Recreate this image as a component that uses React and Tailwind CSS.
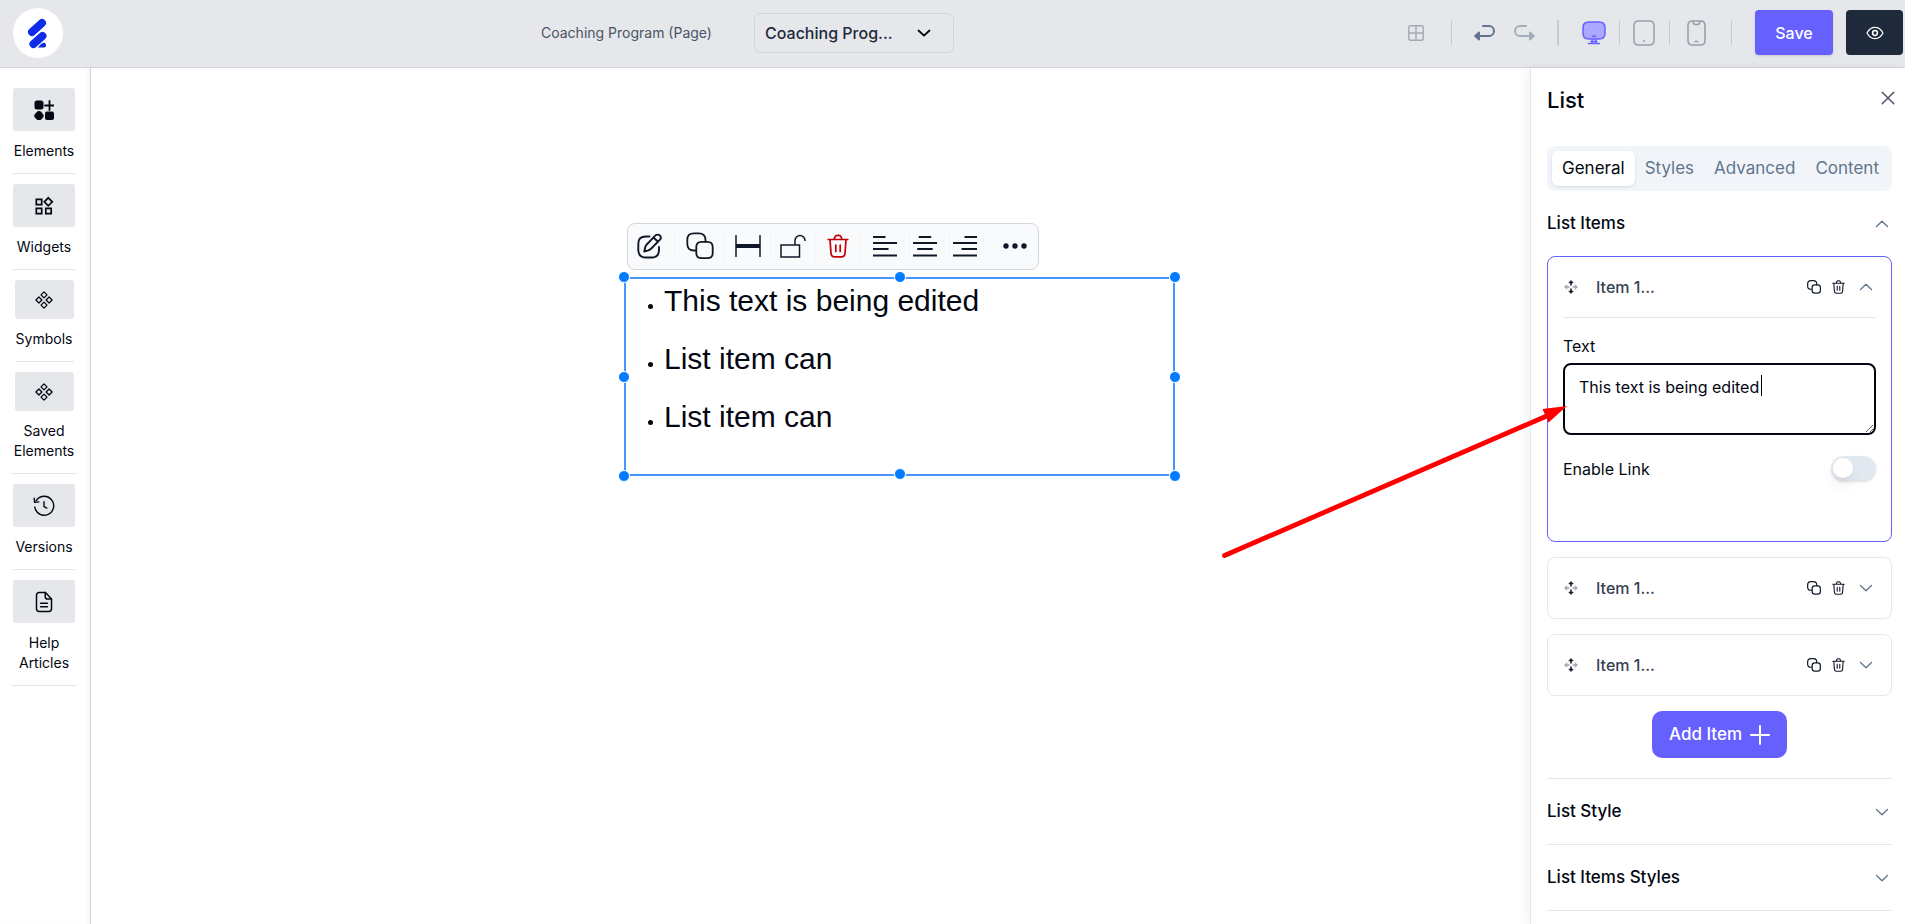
import { useState } from "react";

const stroke = {
  fill: "none",
  stroke: "currentColor",
  strokeLinecap: "round",
  strokeLinejoin: "round",
};

function Logo() {
  return (
    <svg viewBox="0 0 50 50" className="size-[50px]" aria-hidden="true">
      <circle cx="25" cy="25" r="25" fill="#fff" />
      <g stroke="#0f2de8" strokeWidth="8" strokeLinecap="round">
        <path d="M19 24 29 15" />
        <path d="M20.5 36 29.5 28" />
      </g>
      <path d="M24.5 39.5c2-1 3.600-4.800 6.500-4.800 2.600 0 3 4.800 0 4.800z" fill="#0f2de8" />
    </svg>
  );
}

function ElementsIcon() {
  return (
    <svg viewBox="0 0 20 20" className="size-5" fill="currentColor" aria-hidden="true">
      <rect x="0.500" y="0.500" width="9" height="9" rx="2.500" />
      <rect x="11" y="11.500" width="9" height="8.500" rx="2" />
      <path d="M2.500 12.200c1.300-1.500 3.700-1.500 5 0l1.600 2c.8 1 .8 2.200 0 3.200l-1.600 1.800c-1.300 1.400-3.700 1.400-5 0L.8 17.400c-.8-1-.8-2.200 0-3.200z" />
      <path d="M15.500 1v9M11 5.500h9" stroke="currentColor" strokeWidth="1.800" strokeLinecap="round" />
    </svg>
  );
}

function WidgetsIcon() {
  return (
    <svg viewBox="0 0 20 20" className="size-5" fill="none" stroke="currentColor" strokeWidth="1.700" aria-hidden="true">
      <path d="M2.300 3.300h5.400V8.600H2.300zM2.300 12.300h5.400v5.400H2.300zM11.800 12.300h5.400v5.400h-5.400zM14.300 1.800l4 4-4 4-4-4z" />
    </svg>
  );
}

function SymbolsIcon() {
  return (
    <svg viewBox="0 0 18 18" className="size-[18px]" {...stroke} strokeWidth="1.300" aria-hidden="true">
      <path d="M9 .9l3 3-3 3-3-3zM9 11.100l3 3-3 3-3-3zM3.900 6l3 3-3 3-3-3zM14.100 6l3 3-3 3-3-3z" />
    </svg>
  );
}

function VersionsIcon() {
  return (
    <svg viewBox="0 0 22 22" className="size-[22px]" {...stroke} strokeWidth="1.400" aria-hidden="true">
      <path d="M1.800 12a9.500 9.500 0 1 0 1.300-6.200" />
      <path d="M1.200 3.200l.4 4.200 4.200-.5M11 6.800v4.800l2.800 1.500" />
    </svg>
  );
}

function HelpIcon() {
  return (
    <svg viewBox="0 0 18 22" className="h-[22px] w-[18px]" {...stroke} strokeWidth="1.500" aria-hidden="true">
      <path d="M10.500 1.500H4.200A2.700 2.700 0 0 0 1.500 4.200v13.600a2.700 2.700 0 0 0 2.700 2.700h9.600a2.700 2.700 0 0 0 2.700-2.700V8z" />
      <path d="M10.200 1.500v4.300a2.200 2.200 0 0 0 2.200 2.200h4M5.500 12.200h7M5.500 15.800h7" />
    </svg>
  );
}

function Chevron({ up, className = "" }) {
  return (
    <svg viewBox="0 0 14 8" className={`h-2 w-3.5 ${className}`} {...stroke} strokeWidth="1.300" aria-hidden="true">
      <path d={up ? "M1.500 6.500 7 1.200l5.500 5.300" : "M1.500 1.500 7 6.800l5.500-5.300"} />
    </svg>
  );
}

function CopyIcon({ className, width = 1.5 }) {
  return (
    <svg viewBox="0 0 28 28" className={className} {...stroke} strokeWidth={width} aria-hidden="true">
      <path d="M9.500 18.500H8c-4.500 0-6.700-2.200-6.700-6.700V8c0-4.500 2.200-6.700 6.700-6.700h4.800c4.500 0 6.700 2.200 6.700 6.700v1.500" />
      <path d="M15.500 9.800h6c3.500 0 5.200 1.700 5.200 5.200v6c0 3.500-1.700 5.200-5.200 5.200h-6c-3.500 0-5.200-1.700-5.200-5.200v-6c0-3.500 1.700-5.200 5.200-5.200z" />
    </svg>
  );
}

function TrashIcon({ className, width = 1.5 }) {
  return (
    <svg viewBox="0 0 22 24" className={className} {...stroke} strokeWidth={width} aria-hidden="true">
      <path d="M1.200 5.500h19.600M3 5.500l1 14c.2 2.200 1.300 3.300 3.500 3.300h7c2.200 0 3.300-1.100 3.500-3.300l1-14M7 5.300l.8-2c.5-1.300 1.300-1.900 2.700-1.900h1c1.400 0 2.200.6 2.700 1.900l.8 2M8.800 11v6.500M13.200 11v6.500" />
    </svg>
  );
}

function MoveIcon() {
  return (
    <svg viewBox="0 0 14 14" className="size-3.5" aria-hidden="true">
      <g fill="#111827" stroke="#111827" strokeLinejoin="round" strokeWidth="0.600">
        <path d="M7 .4 9.200 2.900H4.800zM7 13.600 4.800 11.100h4.400z" />
        <path d="M7 3v2.500M7 8.500V11" strokeWidth="1.500" />
      </g>
      <g fill="#a1a5ae" stroke="#a1a5ae" strokeLinejoin="round" strokeWidth="0.600">
        <path d="M.4 7 2.900 4.800v4.400zM13.600 7 11.100 9.200V4.800z" />
        <path d="M3 7h2.500M8.500 7H11" strokeWidth="1.500" />
      </g>
    </svg>
  );
}

const railItems = [
  { label: "Elements", Icon: ElementsIcon, box: "h-[43px] w-[62px]", line: "w-[62px]" },
  { label: "Widgets", Icon: WidgetsIcon, box: "h-[43px] w-[62px]", line: "w-[62px]" },
  { label: "Symbols", Icon: SymbolsIcon, box: "h-[39px] w-[59px]", line: "w-[59px]" },
  { label: "Saved Elements", Icon: SymbolsIcon, box: "h-[39px] w-[59px]", line: "w-[66px]" },
  { label: "Versions", Icon: VersionsIcon, box: "h-[43px] w-[62px]", line: "w-[62px]" },
  { label: "Help Articles", Icon: HelpIcon, box: "h-[43px] w-[62px]", line: "w-[66px]" },
];

function Rail() {
  return (
    <nav className="flex w-[91px] shrink-0 flex-col items-center gap-2.5 border-r border-gray-300 bg-white pt-5 pr-[2px] shadow-[inset_-4px_0_6px_-4px_rgba(0,0,0,0.08)]">
      {railItems.map(({ label, Icon, box, line }) => (
        <button key={label} type="button" className="flex flex-col items-center text-sm leading-5 text-gray-950">
          <span className={`flex items-center justify-center rounded-[3px] bg-gray-200 ${box}`}>
            <Icon />
          </span>
          <span className="w-[66px] pt-2.5 pb-3 text-center">{label}</span>
          <span className={`h-px bg-gray-200 ${line}`} />
        </button>
      ))}
    </nav>
  );
}

function Header() {
  return (
    <header className="flex h-[68px] shrink-0 items-center border-b border-gray-300 bg-gray-200 pr-0.5 pb-0.5 pl-[13px]">
      <a href="#home" aria-label="Home">
        <Logo />
      </a>
      <div className="flex flex-1 items-center justify-center gap-[42px] pl-6">
        <span className="text-sm text-gray-600">Coaching Program (Page)</span>
        <button
          type="button"
          aria-haspopup="listbox"
          className="flex h-10 w-[200px] items-center justify-between rounded-md border border-gray-300 pr-[22px] pl-2.5 text-base font-medium text-gray-800"
        >
          Coaching Prog...
          <svg viewBox="0 0 14 8" className="h-2 w-3.5 text-gray-950" {...stroke} strokeWidth="1.800" aria-hidden="true">
            <path d="M1.500 1.500 7 6.700l5.500-5.200" />
          </svg>
        </button>
      </div>
      <div className="flex items-center">
        <button type="button" aria-label="Grid" className="text-[#a3abb6]">
          <svg viewBox="0 0 16 16" className="size-4" {...stroke} strokeWidth="1.400" aria-hidden="true">
            <rect x="0.800" y="0.800" width="14.400" height="14.400" rx="1.500" />
            <path d="M8 1v14M1 8h14" />
          </svg>
        </button>
        <span className="mr-[22px] ml-[27px] h-[25px] w-px bg-[#c5c9d0]" />
        <button type="button" aria-label="Undo" className="text-slate-500">
          <svg viewBox="0 0 21 18" className="h-[18px] w-[21px]" {...stroke} strokeWidth="2" aria-hidden="true">
            <path d="M9 2h6a5 5 0 0 1 0 10H5" />
            <path d="M5 8.500v7L1.200 12z" fill="currentColor" />
          </svg>
        </button>
        <button type="button" aria-label="Redo" className="ml-[19px] text-[#a3adba]">
          <svg viewBox="0 0 21 18" className="h-[18px] w-[21px]" {...stroke} strokeWidth="2" aria-hidden="true">
            <path d="M12 2H6a5 5 0 0 0 0 10h10" />
            <path d="M16 8.500v7l3.800-3.500z" fill="currentColor" />
          </svg>
        </button>
        <span className="mr-[23px] ml-[22px] h-[25px] w-0.5 bg-[#c5c9d0]" />
        <button type="button" aria-label="Desktop view" className="text-[#6660ff]">
          <svg viewBox="0 0 24 24" className="size-6" {...stroke} strokeWidth="1.500" aria-hidden="true">
            <path d="M7 1h10c4 0 6 1.500 6 5.500v6c0 4-2 5.500-6 5.500H7c-4 0-6-1.500-6-5.500v-6C1 2.500 3 1 7 1z" fill="#aaa8ff" />
            <path d="M10.500 15.200h3M10.200 18.500v3.700M13.800 18.500v3.700M6.500 22.500h11M9 20.500h6" />
          </svg>
        </button>
        <span className="mx-[13px] h-[25px] w-px bg-[#c5c9d0]" />
        <button type="button" aria-label="Tablet view" className="text-gray-400">
          <svg viewBox="0 0 22 26" className="h-[26px] w-[22px]" {...stroke} strokeWidth="1.500" aria-hidden="true">
            <path d="M5.500 1h11C19.500 1 21 2.500 21 5.500v15c0 3-1.500 4.500-4.500 4.500h-11C2.500 25 1 23.500 1 20.500v-15C1 2.500 2.500 1 5.500 1z" />
            <path d="M11 21h.1" strokeWidth="2" />
          </svg>
        </button>
        <span className="mr-[17px] ml-[14px] h-[25px] w-px bg-[#c5c9d0]" />
        <button type="button" aria-label="Phone view" className="text-gray-400">
          <svg viewBox="0 0 19 26" className="h-[26px] w-[19px]" {...stroke} strokeWidth="1.600" aria-hidden="true">
            <path d="M5.500 1h8C16.500 1 18 2.500 18 5.500v15c0 3-1.500 4.500-4.500 4.500h-8C2.500 25 1 23.500 1 20.500v-15C1 2.500 2.500 1 5.500 1z" />
            <path d="M6 1.300c0 2.200.8 3.200 2.500 3.200h2C12.200 4.500 13 3.500 13 1.300M8 21.500h3" />
          </svg>
        </button>
        <span className="mr-[23px] ml-[25px] h-[25px] w-px bg-[#c5c9d0]" />
        <button type="button" className="h-[45px] w-[78px] rounded-[4px] bg-[#6660ff] text-base font-medium text-white shadow">
          Save
        </button>
        <button type="button" aria-label="Preview" className="ml-[13px] flex h-[45px] w-[57px] items-center justify-center rounded-[4px] bg-gray-800 text-white">
          <svg viewBox="0 0 18 14" className="h-3.5 w-[18px]" {...stroke} strokeWidth="1.200" aria-hidden="true">
            <path d="M1 7c1.800-3.500 4.600-5.600 8-5.600S15.200 3.500 17 7c-1.800 3.500-4.600 5.600-8 5.600S2.800 10.500 1 7z" />
            <circle cx="9" cy="7" r="2.400" strokeWidth="1.500" />
          </svg>
        </button>
      </div>
    </header>
  );
}

function Divider({ className = "" }) {
  return <span className={`h-[30px] w-px bg-gray-100 ${className}`} />;
}

function AlignIcon({ short, long }) {
  return (
    <svg viewBox="0 0 24 22" className="h-[22px] w-6" fill="none" stroke="currentColor" strokeWidth="2" aria-hidden="true">
      <path d={`M${short} 2h12.500M0 8h24M${long} 14h15.500M0 20.500h24`} />
    </svg>
  );
}

function Toolbar() {
  return (
    <div role="toolbar" aria-label="Element actions" className="flex h-[47px] w-[412px] items-center rounded-lg border border-gray-300 bg-gray-50 pb-0.5 pl-[9px] text-gray-900">
      <button type="button" aria-label="Edit">
        <svg viewBox="0 0 26 26" className="size-[26px]" {...stroke} strokeWidth="1.900" aria-hidden="true">
          <path d="M12.500 3.500H9C3.500 3.500 1.300 5.800 1.300 11v6c0 5.300 2.200 7.500 7.700 7.500h5.500c5.300 0 7.500-2.200 7.500-7.500v-3" />
          <path d="M18.200 2.600 9.300 12c-.6.600-.9 1.500-1.200 2.700L7.300 18.500l4-1.200c1.200-.4 1.900-.7 2.500-1.300l9.200-9.300c1.200-1.200 1.200-2.800 0-4-1.300-1.300-3.500-1.400-4.800-.1zM16.500 4.500l4.500 4.300" />
        </svg>
      </button>
      <Divider className="mr-[11px] ml-[11px]" />
      <button type="button" aria-label="Duplicate">
        <CopyIcon className="size-7" width={1.8} />
      </button>
      <Divider className="mx-2.5" />
      <button type="button" aria-label="Full width">
        <svg viewBox="0 0 26 22" className="h-[22px] w-[26px]" fill="none" stroke="currentColor" aria-hidden="true">
          <path d="M1 0v22M25 0v22" strokeWidth="1.500" />
          <path d="M1 11h24" strokeWidth="4" />
        </svg>
      </button>
      <Divider className="mx-[9px]" />
      <button type="button" aria-label="Unlock">
        <svg viewBox="0 0 26 24" className="h-6 w-[26px]" fill="none" stroke="currentColor" strokeWidth="1.500" aria-hidden="true">
          <path d="M1 11h18.500v12H1zM15 11V6.500a5 5 0 0 1 10 0v.5" />
        </svg>
      </button>
      <Divider className="mr-[11px] ml-[9px]" />
      <button type="button" aria-label="Delete" className="text-red-700">
        <TrashIcon className="h-6 w-[22px]" width={1.7} />
      </button>
      <Divider className="mr-[13px] ml-2.5" />
      <button type="button" aria-label="Align left">
        <AlignIcon short="0" long="0" />
      </button>
      <Divider className="mr-[3px] ml-3" />
      <button type="button" aria-label="Align center">
        <AlignIcon short="5.700" long="4.200" />
      </button>
      <Divider className="mr-[3px] ml-3" />
      <button type="button" aria-label="Align right">
        <AlignIcon short="11.500" long="8.500" />
      </button>
      <button type="button" aria-label="More" className="ml-[26px]">
        <svg viewBox="0 0 24 6" className="h-1.5 w-6" fill="currentColor" aria-hidden="true">
          <circle cx="3" cy="3" r="2.700" />
          <circle cx="12" cy="3" r="2.700" />
          <circle cx="21" cy="3" r="2.700" />
        </svg>
      </button>
    </div>
  );
}

const handles = [
  "-top-2 -left-2",
  "-top-2 left-1/2 -translate-x-1/2",
  "-top-2 -right-2",
  "top-1/2 -left-2 -translate-y-1/2",
  "top-1/2 -right-2 -translate-y-1/2",
  "-bottom-2 -left-2",
  "-bottom-1.5 left-1/2 -translate-x-1/2",
  "-bottom-2 -right-2",
];

function Canvas({ text }) {
  return (
    <main className="min-w-0 flex-1 bg-white pt-[155px] pl-[533px]">
      <div className="pl-[3px]">
        <Toolbar />
      </div>
      <div className="relative mt-[7px] h-[199px] w-[551px] border-2 border-[#4796ff]">
        <ul className="list-disc pl-[38px] font-['Liberation_Sans',Arial,sans-serif] text-[30px] leading-[44px] text-gray-950">
          {[text, "List item can", "List item can"].map((line, i) => (
            <li key={i} className="mb-3.5 marker:text-base">
              {line}
            </li>
          ))}
        </ul>
        {handles.map((place) => (
          <span key={place} className={`absolute size-3 rounded-full border border-white bg-[#007bff] ${place}`} />
        ))}
      </div>
    </main>
  );
}

function CardHeader({ open, onToggle }) {
  return (
    <div className="flex h-[60px] items-center pr-[3px] pl-px">
      <MoveIcon />
      <span className="ml-[18px] flex-1 text-base font-medium text-gray-700">Item 1...</span>
      <button type="button" aria-label="Duplicate item" className="text-gray-900">
        <CopyIcon className="size-3.5" width={2.4} />
      </button>
      <button type="button" aria-label="Delete item" className="ml-[11px] text-gray-900">
        <TrashIcon className="h-3.5 w-[13px]" width={1.9} />
      </button>
      <button type="button" aria-label="Toggle item" aria-expanded={open} onClick={onToggle} className="ml-3.5 text-slate-500">
        <Chevron up={open} />
      </button>
    </div>
  );
}

const tabs = ["General", "Styles", "Advanced", "Content"];

function Panel({ text, setText }) {
  const [tab, setTab] = useState("General");
  const [link, setLink] = useState(false);
  return (
    <aside className="w-[375px] shrink-0 overflow-hidden border-l border-slate-200 bg-white pr-[13px] pl-4 text-base text-gray-950 shadow-[-4px_0_10px_rgba(0,0,0,0.05)]">
      <div className="flex h-[78px] items-start justify-between pt-4">
        <h2 className="text-[22px] leading-8 font-medium">List</h2>
        <button type="button" aria-label="Close" className="-mr-[3px] pt-[7px] text-gray-600">
          <svg viewBox="0 0 14 14" className="size-3.5" {...stroke} strokeWidth="1.500" aria-hidden="true">
            <path d="M1.200 1.200l11.600 11.600M12.800 1.200 1.200 12.800" />
          </svg>
        </button>
      </div>
      <div role="tablist" className="flex h-[45px] items-center justify-between rounded-lg bg-slate-100 px-[5px] text-[17px]">
        {tabs.map((name) => (
          <button
            key={name}
            type="button"
            role="tab"
            aria-selected={tab === name}
            onClick={() => setTab(name)}
            className={`h-[35px] rounded-md px-2.5 ${tab === name ? "bg-white text-gray-950 shadow" : "text-slate-500"}`}
          >
            {name}
          </button>
        ))}
      </div>
      <button type="button" className="flex h-[65px] w-full items-center justify-between pr-[3px] text-[17px] font-medium">
        List Items
        <Chevron up className="text-slate-500" />
      </button>

      <div className="flex flex-col gap-[15px]">
        <section className="h-[286px] rounded-lg border border-[#6660ff] px-[15px]">
          <CardHeader open />
          <div className="border-t border-slate-200 pt-4">
            <label htmlFor="item-text" className="block leading-6">
              Text
            </label>
            <div className="relative mt-[5px]">
              <textarea
                id="item-text"
                value={text}
                onChange={(e) => setText(e.target.value)}
                className="block h-[72px] w-full rounded-lg border-2 border-gray-950 px-3.5 py-2.5 leading-6 outline-none"
              />
              <span className="absolute top-3 left-[198px] h-[21px] w-px bg-black" />
            </div>
            <div className="mt-[21px] flex items-center justify-between">
              <label htmlFor="enable-link" className="leading-6">
                Enable Link
              </label>
              <input
                id="enable-link"
                type="checkbox"
                role="switch"
                checked={link}
                onChange={(e) => setLink(e.target.checked)}
                className="h-[25px] w-[45px] appearance-none rounded-full bg-slate-200 p-0.5 shadow-sm before:block before:size-5 before:rounded-full before:bg-white before:shadow-lg checked:bg-[#6660ff] checked:before:translate-x-5"
              />
            </div>
          </div>
        </section>
        {[2, 3].map((n) => (
          <section key={n} className="rounded-lg border border-gray-200 px-[15px]">
            <CardHeader open={false} />
          </section>
        ))}
      </div>
      <div className="flex justify-center pt-[15px] pb-5">
        <button type="button" className="flex h-[47px] w-[135px] items-center justify-center gap-2 rounded-[10px] bg-[#6660ff] text-[17px] font-medium text-white">
          Add Item
          <svg viewBox="0 0 20 20" className="size-5" {...stroke} strokeWidth="2" aria-hidden="true">
            <path d="M10 1v18M1 10h18" />
          </svg>
        </button>
      </div>
      {["List Style", "List Items Styles"].map((name) => (
        <button key={name} type="button" className="flex h-[66px] w-full items-center justify-between border-t border-slate-200 pr-[3px] text-[17px] font-medium">
          {name}
          <Chevron className="text-slate-500" />
        </button>
      ))}
      <hr className="border-slate-200" />
    </aside>
  );
}

export default function App() {
  const [text, setText] = useState("This text is being edited");
  return (
    <div className="relative flex h-screen flex-col overflow-hidden bg-white font-[Inter,sans-serif]">
      <Header />
      <div className="flex min-h-0 flex-1">
        <Rail />
        <Canvas text={text} />
        <Panel text={text} setText={setText} />
      </div>
      <svg viewBox="0 0 350 156" className="pointer-events-none absolute top-[402px] right-[334px] h-[156px] w-[350px]" aria-hidden="true">
        <path d="M3.500 153.500 328 13" stroke="#ff0000" strokeWidth="4.800" strokeLinecap="round" />
        <path d="M346 4 321.500 7l6 13.500z" fill="#ff0000" />
      </svg>
    </div>
  );
}
